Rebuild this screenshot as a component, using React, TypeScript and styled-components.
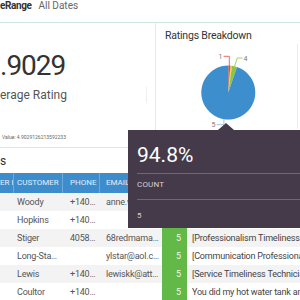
import React from 'react'
import styled, { createGlobalStyle } from 'styled-components'

const GlobalStyle = createGlobalStyle`
  html, body {
    margin: 0;
    padding: 0;
    background: #fff;
  }
  body {
    font-family: Roboto, "Liberation Sans", sans-serif;
    color: #444;
  }
`

const Page = styled.div`
  position: relative;
  width: 300px;
  height: 300px;
  overflow: hidden;
  background: #fff;
`

const TopBar = styled.div`
  display: flex;
  gap: 7px;
  height: 22px;
  line-height: 12px;
  font-size: 10px;
  border-bottom: 1px solid #cfe6e0;
`

const RangeLabel = styled.span`
  font-weight: 700;
  color: #333;
  letter-spacing: -0.4px;
`

const RangeValue = styled.span`
  color: #666;
`

const Cards = styled.div`
  display: flex;
  height: 124px;
  border-bottom: 1px solid #e4e4e4;
`

const StatCard = styled.div`
  width: 155px;
  display: flex;
  flex-direction: column;
`

const BigNumber = styled.div`
  margin-top: 27px;
  font-size: 28px;
  line-height: 32px;
  letter-spacing: -1px;
  color: #333;
`

const StatLabel = styled.div`
  margin-top: 5px;
  width: 146px;
  font-size: 12px;
  line-height: 16px;
  color: #555;
  border-right: 1px solid #efefef;
`

const ValueNote = styled.div`
  margin-top: 30px;
  font-size: 5px;
  line-height: 8px;
  color: #666;
  padding-left: 2px;
`

const ChartCard = styled.div`
  flex: 1;
  border-left: 1px solid #e8e8e8;
  display: flex;
  flex-direction: column;
`

const ChartTitle = styled.div`
  margin-top: 6px;
  padding-left: 9px;
  font-size: 10.5px;
  line-height: 14px;
  letter-spacing: -0.2px;
  color: #333;
`

const ChartBox = styled.div`
  margin-top: 1px;
  width: 141px;
  height: 85px;
  border-right: 1px solid #ececec;
`

const Section = styled.div`
  padding-top: 5px;
`

const SectionTitle = styled.div`
  font-size: 12px;
  line-height: 16px;
  color: #333;
  margin-bottom: 4px;
`

const gridCols = '14px 49px 37px 62px 25px 220px'

const TableHead = styled.div`
  display: grid;
  grid-template-columns: ${gridCols};
  height: 20px;
  background: #3d8dcc;
`

const HeadCell = styled.div<{ $pad: number }>`
  padding-left: ${p => p.$pad}px;
  font-size: 8px;
  line-height: 20px;
  color: #e3eef8;
  white-space: nowrap;
  overflow: hidden;
  border-right: 1px solid rgba(255, 255, 255, 0.25);
`

const TableRow = styled.div<{ $striped: boolean }>`
  display: grid;
  grid-template-columns: ${gridCols};
  height: 18px;
  background: ${p => (p.$striped ? '#f3f3f3' : '#fff')};
`

const Cell = styled.div<{ $pad: number }>`
  padding: 0 3px 0 ${p => p.$pad}px;
  font-size: 9px;
  letter-spacing: -0.2px;
  line-height: 18px;
  color: #555;
  white-space: nowrap;
  overflow: hidden;
  text-overflow: ellipsis;
`

const RatingCell = styled.div`
  background: #63b947;
  color: #eef8ea;
  font-size: 9px;
  line-height: 18px;
  text-align: right;
  padding-right: 6px;
`

const CommentCell = styled.div`
  padding-left: 5px;
  font-size: 9px;
  letter-spacing: -0.2px;
  line-height: 18px;
  color: #444;
  white-space: nowrap;
  overflow: hidden;
`

const Tooltip = styled.div`
  position: absolute;
  left: 128px;
  top: 130px;
  width: 190px;
  height: 98px;
  box-sizing: border-box;
  padding: 13px 0 0 9px;
  background: #443a4a;
  &::before {
    content: '';
    position: absolute;
    left: 90px;
    top: -7px;
    border-left: 8px solid transparent;
    border-right: 8px solid transparent;
    border-bottom: 7px solid #443a4a;
  }
`

const TipValue = styled.div`
  font-size: 21px;
  line-height: 24px;
  color: #fff;
`

const TipRule = styled.div<{ $gap: number }>`
  margin-top: ${p => p.$gap}px;
  height: 1px;
  background: #50709c;
`

const TipText = styled.div<{ $gap: number }>`
  margin-top: ${p => p.$gap}px;
  font-size: 8px;
  line-height: 12px;
  letter-spacing: 0.2px;
  color: #d6d0da;
`

const columns = [
  { key: 'ref', title: 'ER F', pad: 0 },
  { key: 'customer', title: 'CUSTOMER', pad: 3 },
  { key: 'phone', title: 'PHONE', pad: 7 },
  { key: 'email', title: 'EMAIL', pad: 6 },
] as const

type Review = {
  ref: string
  customer: string
  phone: string
  email: string
  rating: number
  comment: string
}

const reviews: Review[] = [
  { ref: '', customer: 'Woody', phone: '+14055550118', email: 'anne.woody@gmail.com', rating: 5, comment: 'Great service, very friendly technician' },
  { ref: '', customer: 'Hopkins', phone: '+14055550162', email: '', rating: 5, comment: '[Timeliness Professionalism]' },
  { ref: '', customer: 'Stiger', phone: '4058675309', email: '68redmama@yahoo.com', rating: 5, comment: '[Professionalism Timeliness Technician Knowledge]' },
  { ref: '', customer: 'Long-Stanton', phone: '', email: 'ylstar@aol.com', rating: 5, comment: '[Communication Professionalism Timeliness]' },
  { ref: '', customer: 'Lewis', phone: '+14055550197', email: 'lewiskk@att.net', rating: 5, comment: '[Service Timeliness Technician Knowledge]' },
  { ref: '', customer: 'Coultor', phone: '+14055550133', email: '', rating: 5, comment: 'You did my hot water tank and it works great' },
]

const slices = [
  { label: '1', value: 1.2, color: '#e2493b' },
  { label: '2', value: 0.4, color: '#f0932b' },
  { label: '3', value: 0.6, color: '#f2cf3f' },
  { label: '4', value: 3.0, color: '#8cc63f' },
  { label: '5', value: 94.8, color: '#3d8ecd' },
]

const CX = 72.3
const CY = 48.5
const R = 27

const pt = (deg: number, r: number) => {
  const a = (deg * Math.PI) / 180
  return [CX + r * Math.sin(a), CY - r * Math.cos(a)]
}

const PieChart = () => {
  let start = 0
  const parts = slices.map(s => {
    const a0 = start
    const a1 = start + (s.value / 100) * 360
    start = a1
    const [x0, y0] = pt(a0, R)
    const [x1, y1] = pt(a1, R)
    const large = a1 - a0 > 180 ? 1 : 0
    return { ...s, d: `M${CX},${CY} L${x0},${y0} A${R},${R} 0 ${large} 1 ${x1},${y1} Z` }
  })

  return (
    <svg width="141" height="85" viewBox="0 0 141 85">
      {parts.map(p => (
        <path key={p.label} d={p.d} fill={p.color} />
      ))}
      {/* leader lines */}
      <polyline points="73.3,21.6 73.3,12.3 67.5,12.3" fill="none" stroke="#e2493b" strokeWidth="0.8" />
      <polyline points="78.6,22.2 81.3,14 86.5,14" fill="none" stroke="#8cc63f" strokeWidth="0.8" />
      <polyline points="67.9,75.2 67.9,80.7 60.5,80.7" fill="none" stroke="#8fb3c9" strokeWidth="0.8" />
      <text x="66.5" y="15" fontSize="7" fill="#777" textAnchor="end" fontFamily="Roboto">1</text>
      <text x="87.5" y="16.5" fontSize="7" fill="#777" fontFamily="Roboto">4</text>
      <text x="59.5" y="83.2" fontSize="7" fill="#777" textAnchor="end" fontFamily="Roboto">5</text>
    </svg>
  )
}

const App = () => {
  return (
    <Page>
      <GlobalStyle />
      <TopBar>
        <RangeLabel>eRange</RangeLabel>
        <RangeValue>All Dates</RangeValue>
      </TopBar>

      <Cards>
        <StatCard>
          <BigNumber>.9029</BigNumber>
          <StatLabel>erage Rating</StatLabel>
          <ValueNote>Value: 4.9029126213592233</ValueNote>
        </StatCard>
        <ChartCard>
          <ChartTitle>Ratings Breakdown</ChartTitle>
          <ChartBox>
            <PieChart />
          </ChartBox>
        </ChartCard>
      </Cards>

      <Section>
        <SectionTitle>s</SectionTitle>
        <TableHead>
          {columns.map(c => (
            <HeadCell key={c.key} $pad={c.pad}>{c.title}</HeadCell>
          ))}
          <HeadCell $pad={4}>RATING</HeadCell>
          <HeadCell $pad={5}>COMMENTS</HeadCell>
        </TableHead>
        {reviews.map((r, i) => (
          <TableRow key={r.customer} $striped={i % 2 === 0}>
            {columns.map(c => (
              <Cell key={c.key} $pad={c.pad}>{r[c.key]}</Cell>
            ))}
            <RatingCell>{r.rating}</RatingCell>
            <CommentCell>{r.comment}</CommentCell>
          </TableRow>
        ))}
      </Section>

      <Tooltip>
        <TipValue>94.8%</TipValue>
        <TipRule $gap={6} />
        <TipText $gap={5}>COUNT</TipText>
        <TipRule $gap={8} />
        <TipText $gap={10}>5</TipText>
      </Tooltip>
    </Page>
  )
}

export default App
